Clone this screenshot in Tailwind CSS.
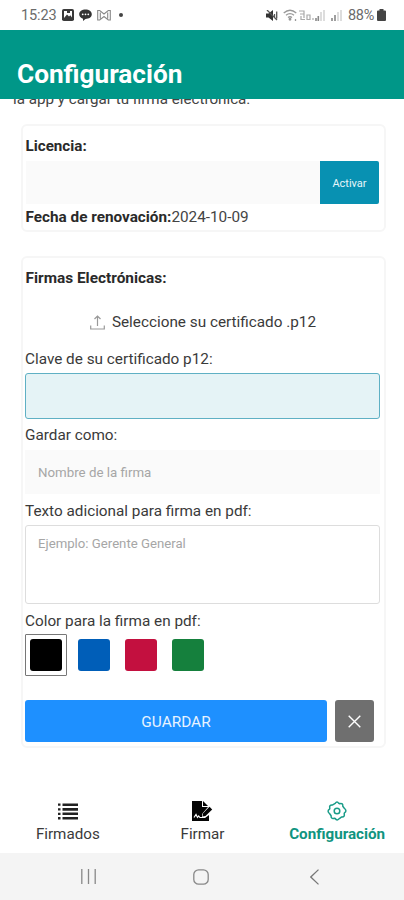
<!DOCTYPE html>
<html lang="es">
<head>
<meta charset="utf-8">
<title>Configuración</title>
<script src="https://cdn.jsdelivr.net/npm/@tailwindcss/browser@4"></script>
</head>
<body class="w-[404px] h-[900px] overflow-hidden bg-white font-[Roboto,sans-serif] text-[#3a3a3a] whitespace-nowrap flex flex-col">

<!-- Status bar -->
<div class="h-[30px] shrink-0 flex items-center pl-[21px] pr-[18px] text-[#6b6b6b]">
  <span class="text-[14.5px] tracking-[-0.1px] w-[41px] pt-[1px]">15:23</span>
  <svg class="w-3 h-3" viewBox="0 0 12 12"><rect width="12" height="12" rx="1.8" fill="#3a3a3a"/><rect x="2" y="2" width="8" height="7" fill="#fff"/><path d="M2 9 5 5.5 7 7.5 8.3 6.3 10 8.4V10H2z" fill="#3a3a3a"/><rect x="5" y="2" width="3" height="2" fill="#3a3a3a"/></svg>
  <svg class="w-[13px] h-3 ml-[5px]" viewBox="0 0 13 12"><path d="M6.5.5C10 .5 12.8 2.5 12.8 5.3S10 10 6.5 10L4 12V9.7C1.700 9 .2 7.400.2 5.300.2 2.500 3 .5 6.500.5z" fill="#333"/><g fill="#fff"><circle cx="3.700" cy="5.300" r=".9"/><circle cx="6.500" cy="5.300" r=".9"/><circle cx="9.300" cy="5.300" r=".9"/></g></svg>
  <svg class="w-[14px] h-3 ml-[5px]" viewBox="0 0 14 12" fill="none" stroke="#888" stroke-width="1.100"><path d="M.7 11V1.500h2L7 5l4.300-3.500h2V11h-2L7 7.500 2.700 11zM3.300 3.500v6M10.700 3.500v6"/></svg>
  <span class="w-1 h-1 rounded-full bg-[#444] ml-2"></span>
  <div class="ml-auto flex items-center">
    <svg class="w-[12px] h-[11px]" viewBox="0 0 12 11"><path d="M0 3.500h2.500L7 0v11L2.500 7.500H0z" fill="#333"/><path d="M1 0 11 10M8.500 4v3M10.700 1.500v7" stroke="#555" stroke-width="1.300"/></svg>
    <svg class="w-[14px] h-[12px] ml-[5px]" viewBox="0 0 14 12" fill="none" stroke="#999" stroke-width="1.300"><path d="M.7 4Q7-1.500 13.300 4M3 6.300Q7 3 11 6.300M5 8.500Q7 7 9 8.500"/><circle cx="7" cy="10.300" r=".8" fill="#777"/><path d="M12.500 10v2"/></svg>
    <svg class="w-[27px] h-[12px] ml-[2px]" viewBox="0 0 27 12" fill="none" stroke="#aaa" stroke-width="1.200"><path d="M0 2h5v3H1h4v4M2 7v3.500h4M8 6h3v4.500H8zM14 11V9"/><path d="M17 12V9M19.300 12V7" stroke="#888" stroke-width="1.600"/><path d="M22 12V3M25 12V1" stroke="#ddd" stroke-width="2"/></svg>
    <svg class="w-[11px] h-[12px] ml-[5px]" viewBox="0 0 11 12" fill="none"><path d="M1 12V9M4 12V6" stroke="#888" stroke-width="1.600"/><path d="M7 12V3M10 12V1" stroke="#ddd" stroke-width="2"/></svg>
    <span class="text-[14.500px] ml-[6px] w-[28px] tracking-[-0.3px] pt-[1px]">88%</span>
    <svg class="w-[9px] h-[12px] ml-[1px]" viewBox="0 0 9 12"><path d="M2.500 0h4v1.500H8a1 1 0 0 1 1 1V11a1 1 0 0 1-1 1H1a1 1 0 0 1-1-1V2.500a1 1 0 0 1 1-1h1.500z" fill="#444"/></svg>
  </div>
</div>

<!-- App header -->
<header class="h-[69px] shrink-0 bg-[#009788] pl-[17px] pt-[29px]">
  <h1 class="text-[26.2px] leading-[30px] font-bold text-white">Configuración</h1>
</header>

<!-- Scrolled content -->
<main class="h-[691px] shrink-0 overflow-hidden px-[21px]">
  <p class="-mt-[10px] -ml-[8px] h-[20px] leading-[20px] text-[15.200px] text-[#444]">la app y cargar tu firma electrónica.</p>

  <section class="mt-[15px] h-[108px] w-[365px] rounded-md border-2 border-[#f6f6f6] pl-[2.500px] pr-[5px] pt-[10px] text-[15.300px] leading-[20px]">
    <h2 class="font-bold text-[#2a2a2a] text-[15.200px]">Licencia:</h2>
    <div class="mt-[5px] flex h-[43px]">
      <div class="flex-1 bg-[#fafafa]"></div>
      <button class="w-[59px] bg-[#0891b2] rounded-r-[2px] text-[11px] text-[#e6f6fa] pt-[2px]">Activar</button>
    </div>
    <p class="mt-[3px] text-[#444]"><b class="text-[#2a2a2a]">Fecha de renovación:</b>2024-10-09</p>
  </section>

  <section class="mt-[24px] h-[492px] w-[365px] rounded-md border-2 border-[#f6f6f6] pl-[2px] pr-[4px] pt-[10px] text-[15.300px] leading-[20px]">
    <h2 class="font-bold text-[#2a2a2a] text-[15.400px] pl-[0.500px]">Firmas Electrónicas:</h2>
    <div class="mt-[24px] flex items-center justify-center gap-[7px] text-[15.300px] h-[20px] pl-[1px]">
      <svg class="w-[15px] h-[15px]" viewBox="0 0 15 15" fill="none" stroke="#999" stroke-width="1.200"><path d="M.7 10.500v3.500h13.600v-3.500M7.500 11V1M4.500 4l3-3 3 3"/></svg>
      <span>Seleccione su certificado .p12</span>
    </div>
    <label class="mt-[17px] block">Clave de su certificado p12:</label>
    <div class="mt-[4px] h-[46px] w-[355px] rounded-[3px] border border-[#5fb0c4] bg-[#e5f3f6]"></div>
    <label class="mt-[6px] block">Gardar como:</label>
    <div class="mt-[5px] h-[44px] w-[355px] bg-[#fafafa] pl-[13px] leading-[45px] text-[13.300px] text-[#a6a6a6]">Nombre de la firma</div>
    <label class="mt-[7px] block">Texto adicional para firma en pdf:</label>
    <div class="mt-[4px] h-[79px] w-[355px] rounded-[3px] border border-[#ddd] pl-[12px] pt-[8px] text-[13.200px] text-[#a6a6a6]">Ejemplo: Gerente General</div>
    <label class="mt-[7px] block">Color para la firma en pdf:</label>
    <div class="mt-[3px] flex h-[42px] items-center">
      <div class="flex h-[42px] w-[42px] items-center justify-center rounded-[1px] border border-[#777]"><div class="size-8 rounded-[3px] bg-black"></div></div>
      <div class="-mt-[1px] ml-[11px] size-8 rounded-[3px] bg-[#005eb8]"></div>
      <div class="-mt-[1px] ml-[15px] size-8 rounded-[3px] bg-[#c3103f]"></div>
      <div class="-mt-[1px] ml-[15px] size-8 rounded-[3px] bg-[#15803d]"></div>
    </div>
    <div class="mt-[24px] flex h-[42px] gap-2">
      <button class="w-[302px] rounded-[3px] bg-[#1e90ff] text-[15.400px] text-[#e8f3ff] pt-[1px]">GUARDAR</button>
      <button class="flex w-[39px] items-center justify-center rounded-[3px] bg-[#6f6f6f]"><svg class="size-[13px]" viewBox="0 0 13 13" stroke="#fff" stroke-width="1.400"><path d="m.7.7 11.600 11.600M12.300.7.7 12.300"/></svg></button>
    </div>
  </section>
</main>

<!-- Tabs -->
<nav class="grid h-[63px] shrink-0 grid-cols-3 text-[15.200px] leading-[20px] pt-[11px]">
  <div class="flex flex-col items-center pl-[1px]">
    <svg class="h-[20px] w-[20px]" viewBox="0 0 20 20" fill="#222"><path d="M0 2.500h2.500v2.300H0zM0 7.200h2.500v2.300H0zM0 11.700h2.500V14H0zM0 16h2.500v2.500H0zM4.500 2.500H20v2.500H4.500zM4.500 7H20v2.800H4.500zM4.500 11.500H20V14H4.500zM4.500 16H20v2.500H4.500z"/></svg>
    <span class="mt-[3px]">Firmados</span>
  </div>
  <div class="flex flex-col items-center pl-[1px]">
    <svg class="h-[20px] w-[22px]" viewBox="0 0 22 20"><path d="M1 0h10v6h6l-6 7v4h3l4-3v6H1z" fill="#050505"/><path d="m12 0 5 5h-5z" fill="#050505"/><path d="m11.800 12.500 6.700-6.700 2.700 2.600-6.700 6.700-3 .5z" fill="#050505"/><path d="m3 16.500 2-3 1.500 3 1.200-1.500 1.200 1.500H12" fill="none" stroke="#fff" stroke-width="1.200"/></svg>
    <span class="mt-[3px]">Firmar</span>
  </div>
  <div class="flex flex-col items-center pl-[1px] text-[#109480]">
    <svg class="h-[20px] w-[20px]" viewBox="0 0 20 20" fill="none" stroke="#1a9c88" stroke-width="1.500" stroke-linejoin="round"><path d="M8.200 2.300Q10-.500 11.800 2.300L12.700 2.700Q16.200 1.800 15.800 5.300L17.300 7.300Q20.400 10 17.500 11.800L17.200 12.800Q18.100 16.200 14.700 15.900L12.700 17.300Q10 20.400 8.200 17.500L7.200 17.200Q3.800 18.100 4.100 14.700L2.700 12.700Q-.400 10 2.500 8.200L2.800 7.200Q1.900 3.800 5.300 4.100Z"/><circle cx="10" cy="10" r="2.800"/></svg>
    <span class="mt-[3px] font-bold text-[15.200px]">Configuración</span>
  </div>
</nav>

<!-- System navigation -->
<div class="flex h-[47px] shrink-0 items-center bg-[#f4f4f4] pl-[81px]">
  <svg class="h-[15px] w-[15px]" viewBox="0 0 15 15" stroke="#888" stroke-width="1.300"><path d="M.8 0v15M7.500 0v15M14.200 0v15"/></svg>
  <svg class="ml-[97px] h-[16px] w-[16px]" viewBox="0 0 16 16" fill="none" stroke="#888" stroke-width="1.300"><rect x=".8" y=".8" width="14.400" height="14.400" rx="4.800"/></svg>
  <svg class="ml-[101px] h-[16px] w-[9px]" viewBox="0 0 9 16" fill="none" stroke="#777" stroke-width="1.300"><path d="M8.500.6.8 8l7.700 7.400"/></svg>
</div>
</body>
</html>
